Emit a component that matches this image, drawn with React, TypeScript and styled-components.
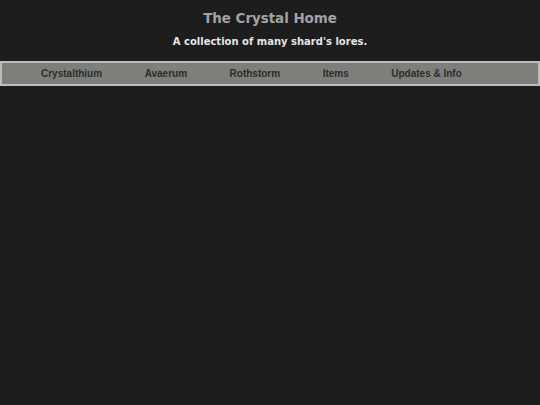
import React from "react";
import styled, { createGlobalStyle } from "styled-components";

const Global = createGlobalStyle`
  html, body { margin: 0; padding: 0; background: #1d1d1d; }
  body { font-family: "DejaVu Sans", Verdana, sans-serif; }
`;

const Page = styled.div`
  min-height: 405px;
  background: #1d1d1d;
`;

const Header = styled.header`
  display: flex;
  flex-direction: column;
  align-items: center;
  padding-top: 10px;
`;

const Title = styled.h1`
  margin: 0;
  font-family: "DejaVu Sans", Verdana, sans-serif;
  font-size: 13.4px;
  font-weight: bold;
  color: #a3a3a3;
  line-height: 18px;
`;

const Subtitle = styled.h2`
  margin: 7px 0 0 0;
  font-family: "DejaVu Sans", Verdana, sans-serif;
  font-size: 10px;
  font-weight: bold;
  color: #e6e6e6;
  line-height: 14px;
`;

const Nav = styled.nav`
  margin-top: 12px;
  height: 21px;
  border: 2px solid #bdbdbd;
  background: #7e7f7b;
  display: flex;
  align-items: center;
  padding-left: 39px;
  gap: 42.5px;
`;

const NavItem = styled.a`
  font-family: "Liberation Sans", Arial, sans-serif;
  font-size: 10px;
  font-weight: bold;
  color: #2c2c2c;
  text-decoration: none;
`;

const items = ["Crystalthium", "Avaerum", "Rothstorm", "Items", "Updates & Info"];

export default function App() {
  return (
    <Page>
      <Global />
      <Header>
        <Title>The Crystal Home</Title>
        <Subtitle>A collection of many shard's lores.</Subtitle>
      </Header>
      <Nav>
        {items.map((i) => (
          <NavItem key={i} href="#">{i}</NavItem>
        ))}
      </Nav>
    </Page>
  );
}
